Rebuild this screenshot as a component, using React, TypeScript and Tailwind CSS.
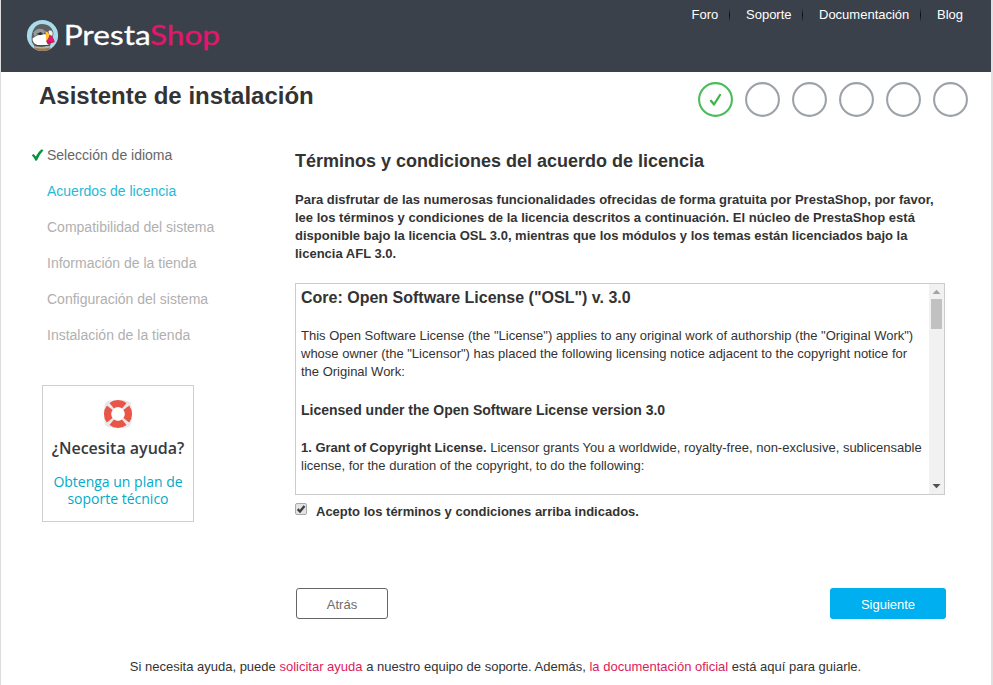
const links = [
  { label: 'Foro', width: 'w-[37.5px]' },
  { label: 'Soporte', width: 'w-[56px]' },
  { label: 'Documentación', width: 'w-[101px]' },
  { label: 'Blog', width: 'w-[27px]' },
];

const steps = [
  { label: 'Selección de idioma', color: 'text-[#666666]', done: true },
  { label: 'Acuerdos de licencia', color: 'text-[#25b9d7]', done: false },
  { label: 'Compatibilidad del sistema', color: 'text-[#b0b0b0]', done: false },
  { label: 'Información de la tienda', color: 'text-[#b0b0b0]', done: false },
  { label: 'Configuración del sistema', color: 'text-[#b0b0b0]', done: false },
  { label: 'Instalación de la tienda', color: 'text-[#b0b0b0]', done: false },
];

function Logo() {
  return (
    <svg width="200" height="40" viewBox="20 16 200 40" role="img" aria-label="PrestaShop">
      <defs>
        <clipPath id="disc">
          <circle cx="42.5" cy="35.5" r="15.6" />
        </clipPath>
      </defs>
      <circle cx="42.5" cy="35.5" r="15.6" fill="#a9dbea" />
      <g clipPath="url(#disc)">
        <path d="M31.8 42C30.5 31 35 24 42 24C48.5 24 53 28 53.5 34L50 46L35 47Z" fill="#5e5f61" />
        <path d="M33.5 32.5C36 28 42 27.5 45 31L44 34L34 36Z" fill="#98999b" />
        <path d="M32.5 38.5C36 35.5 41 33.5 46 34.5L48.5 45H37C33.8 43.5 32.5 41.5 32.5 38.5Z" fill="#fff" />
        <path d="M48.5 31C51.5 29.8 53.3 31.5 52.5 35.5L49.5 36Z" fill="#f0f0f0" />
        <path d="M36.5 34L40.5 32L43.7 34L40 35.2Z" fill="#303032" />
        <path d="M45 31.5C48 31.3 49.3 33.2 49.3 36.5L46.8 41C45 39 46.8 35 45 31.5Z" fill="#fdc733" />
        <path d="M49.3 34.8C52 35.5 54.2 38.5 54.7 42.3L48.5 43.5L46 41C48.3 39.3 49.3 37.5 49.3 34.8Z" fill="#e5156b" />
        <path d="M46.2 41L53.5 42.4L47.5 44Z" fill="#c4145f" />
        <path d="M35.5 45.2Q42 47.2 48.5 45.2" fill="none" stroke="#4a4036" strokeWidth="1" />
        <path d="M34.5 46.2Q42 48.2 50 46.2L51 53H34Z" fill="#9c7b56" />
        <path d="M34.8 46.9Q42 49 50 46.9" fill="none" stroke="#cdb18b" strokeWidth="1.3" />
      </g>
      <g fontSize="27" strokeWidth="0.3" className="font-['Lato',sans-serif]">
        <text x="63.7" y="45" textLength="87" lengthAdjust="spacingAndGlyphs" fill="#fff" stroke="#fff">
          Presta
        </text>
        <text x="150" y="45" textLength="70" lengthAdjust="spacingAndGlyphs" fill="#e5156b" stroke="#e5156b">
          Shop
        </text>
      </g>
    </svg>
  );
}

function LifeBuoy() {
  return (
    <svg width="30" height="30" viewBox="-15 -15 30 30">
      <path
        fillRule="evenodd"
        d="M0-14C8-14 11-13 12-12C13-11 14-8 14 0C14 8 13 11 12 12C11 13 8 14 0 14C-8 14-11 13-12 12C-13 11-14 8-14 0C-14-8-13-11-12-12C-11-13-8-14 0-14ZM0-6.6A6.6 6.6 0 1 0 0 6.6A6.6 6.6 0 1 0 0-6.6Z"
        fill="#e9e9eb"
      />
      <path
        d="M-8.6-11.1A14 14 0 0 1 8.6-11.1L4-5.4A6.7 6.7 0 0 0-4-5.4ZM-8.6 11.1A14 14 0 0 0 8.6 11.1L4 5.4A6.7 6.7 0 0 1-4 5.4ZM-11.1-8.6A14 14 0 0 0-11.1 8.6L-5.4 4A6.7 6.7 0 0 1-5.4-4ZM11.1-8.6A14 14 0 0 1 11.1 8.6L5.4 4A6.7 6.7 0 0 0 5.4-4Z"
        fill="#e95647"
      />
    </svg>
  );
}

export default function App() {
  return (
    <div className="h-[685px] w-[993px] overflow-hidden border-l border-r-2 border-l-[#dcdcdc] border-r-[#e0e0e0] bg-white font-['Liberation_Sans',Arial,sans-serif] text-[13px] leading-[18px] text-[#333333]">
      <header className="flex h-[72px] justify-between bg-[#3b414b] pr-[27px] pl-[19px]">
        <div className="pt-4">
          <Logo />
        </div>
        <nav className="mt-[6px] flex h-[18px] text-white">
          {links.map((link, i) => (
            <div key={link.label} className="flex">
              <a className={`${link.width} whitespace-nowrap`}>{link.label}</a>
              {i < 3 && (
                <span className="mt-[2px] mr-4 h-[14px] w-px bg-gradient-to-b from-[#3b414b] via-[#0c0d0f] to-[#3b414b]" />
              )}
            </div>
          ))}
        </nav>
      </header>

      <div className="flex h-[69px] justify-between pr-[23px] pl-[38px]">
        <h1 className="pt-2 text-[24px] leading-8 font-bold">Asistente de instalación</h1>
        <div className="flex gap-3 pt-[10px]">
          {[0, 1, 2, 3, 4, 5].map((n) => (
            <svg key={n} width="35" height="35" viewBox="0 0 35 35" fill="none">
              <circle cx="17.5" cy="17.5" r="16.4" stroke={n === 0 ? '#4cbb5c' : '#9da2aa'} strokeWidth="2.1" />
              {n === 0 && (
                <path d="M13 18.8L16 22.5L22 13" stroke="#3db54e" strokeWidth="2.3" strokeLinecap="round" strokeLinejoin="round" />
              )}
            </svg>
          ))}
        </div>
      </div>

      <div className="flex h-[437px]">
        <aside className="w-[294px] shrink-0 pl-[30px]">
          <ul className="text-[14px]">
            {steps.map((step) => (
              <li key={step.label} className={`flex h-9 items-start pt-[5px] ${step.color}`}>
                <span className="w-4 pt-[2px]">
                  {step.done && (
                    <svg width="13" height="14" viewBox="0 0 13 14">
                      <path d="M0.8 7.2L2.6 6L4.8 8.4Q7 3.8 10.6 1.2L12.4 2.2Q8.6 6 6 12.6L4.4 12.8Q3 9.4 0.8 7.2Z" fill="#009639" />
                    </svg>
                  )}
                </span>
                {step.label}
              </li>
            ))}
          </ul>
          <div className="mt-7 ml-[11px] flex h-[137px] w-[152px] flex-col items-center border border-[#cfcfcf] pt-[13px] font-['Open_Sans',sans-serif]">
            <LifeBuoy />
            <p className="mt-[9px] text-[16px] leading-5 font-semibold whitespace-nowrap text-[#363a41]">¿Necesita ayuda?</p>
            <p className="mt-[15px] text-center text-[14px] leading-[17px] whitespace-nowrap text-[#00aac9]">
              Obtenga un plan de
              <br />
              soporte técnico
            </p>
          </div>
        </aside>

        <main className="w-[651px]">
          <h2 className="pt-2 text-[18px] leading-6 font-bold">Términos y condiciones del acuerdo de licencia</h2>
          <p className="mt-[18px] font-bold whitespace-nowrap">
            Para disfrutar de las numerosas funcionalidades ofrecidas de forma gratuita por PrestaShop, por favor,
            <br />
            lee los términos y condiciones de la licencia descritos a continuación. El núcleo de PrestaShop está
            <br />
            disponible bajo la licencia OSL 3.0, mientras que los módulos y los temas están licenciados bajo la
            <br />
            licencia AFL 3.0.
          </p>
          <div className="mt-5 flex h-[212px] w-[650px] justify-between border border-[#cccccc]">
            <div className="pt-[5px] pl-[5px] whitespace-nowrap">
              <h3 className="text-[16px] font-bold">Core: Open Software License ("OSL") v. 3.0</h3>
              <p className="mt-5">
                This Open Software License (the "License") applies to any original work of authorship (the "Original Work")
                <br />
                whose owner (the "Licensor") has placed the following licensing notice adjacent to the copyright notice for
                <br />
                the Original Work:
              </p>
              <h4 className="mt-5 text-[14px] font-bold">Licensed under the Open Software License version 3.0</h4>
              <p className="mt-5">
                <b>1. Grant of Copyright License.</b> Licensor grants You a worldwide, royalty-free, non-exclusive, sublicensable
                <br />
                license, for the duration of the copyright, to do the following:
              </p>
            </div>
            <div className="flex w-[15px] flex-col items-center bg-[#f1f1f1]">
              <svg width="15" height="15">
                <path d="M3.5 10L7.5 5.8L11.5 10Z" fill="#a3a3a3" />
              </svg>
              <div className="h-[30px] w-[11px] bg-[#c1c1c1]" />
              <svg width="15" height="15" className="mt-auto">
                <path d="M3.5 5L7.5 9.2L11.5 5Z" fill="#505050" />
              </svg>
            </div>
          </div>
          <label className="flex h-[35px] pt-2 font-bold">
            <svg width="12" height="12" viewBox="0 0 12 12" fill="none">
              <rect x="0.5" y="0.5" width="11" height="11" rx="1.5" fill="#e4e4e4" stroke="#aaaaaa" />
              <path d="M2.7 6.2L5 8.5L9.5 3" stroke="#404040" strokeWidth="2.4" />
            </svg>
            <span className="ml-[9px]">Acepto los términos y condiciones arriba indicados.</span>
          </label>
          <div className="mt-[58px] flex justify-between pl-px">
            <button className="h-[31px] w-[92px] rounded-[3px] border border-[#666666] pt-0.5 text-[#6c6c6c]">Atrás</button>
            <button className="h-[31px] w-[116px] rounded-[3px] bg-[#00aff0] pt-0.5 text-white">Siguiente</button>
          </div>
        </main>
      </div>

      <footer className="pt-20 pr-px text-center">
        Si necesita ayuda, puede <a className="text-[#db1b5c]">solicitar ayuda</a> a nuestro equipo de soporte. Además,{' '}
        <a className="text-[#db1b5c]">la documentación oficial</a> está aquí para guiarle.
      </footer>
    </div>
  );
}
